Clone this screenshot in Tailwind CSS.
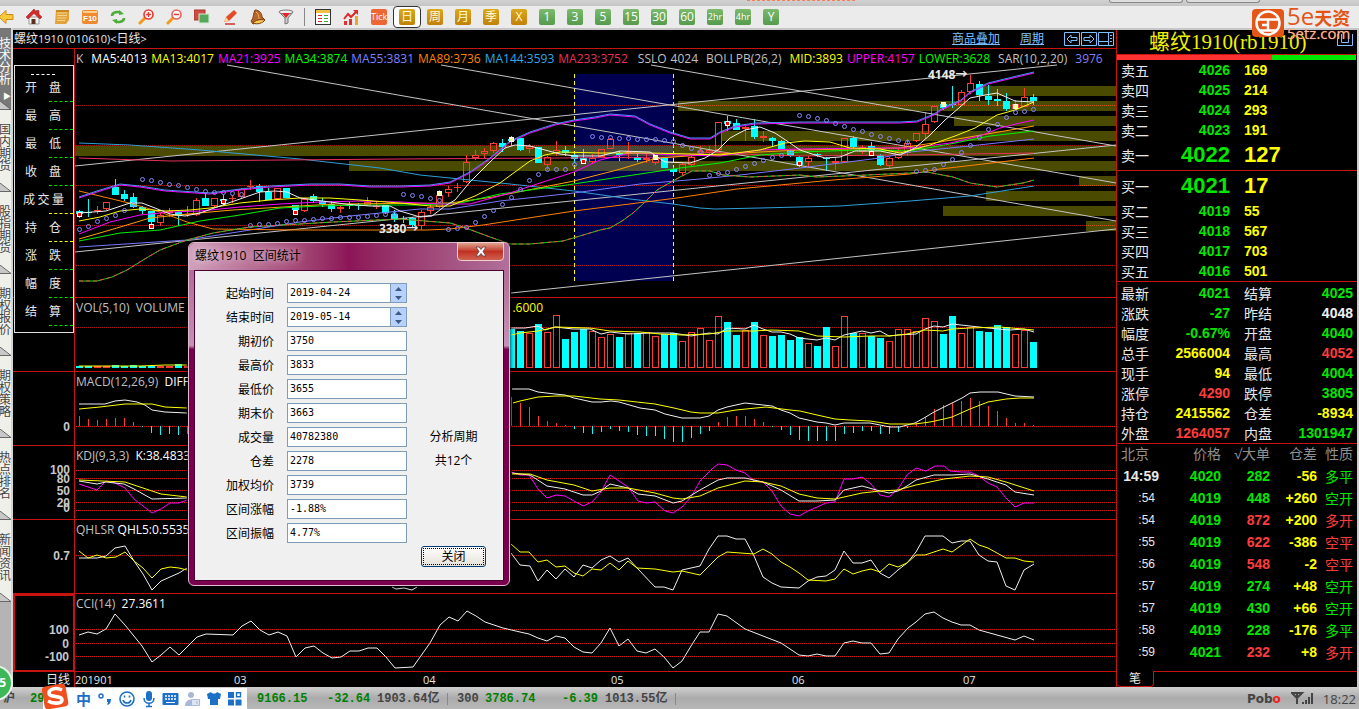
<!DOCTYPE html>
<html lang="zh-CN">
<head>
  <meta charset="UTF-8" />
  <meta name="viewport" content="width=device-width, initial-scale=1.0"/>
  <title>螺纹1910 日线</title>
  <script src="https://cdn.jsdelivr.net/npm/@tailwindcss/browser@4"></script>
</head>
<body class="relative flex flex-col h-screen overflow-hidden bg-black text-[#e8e8e8] text-[12px] leading-4 font-['Open_Sans','Noto_Sans_CJK_SC',sans-serif]">

  <!-- Window strip -->
  <div class="relative h-[6px] shrink-0 bg-gradient-to-b from-[#d2d2d2] to-[#c4c4c4] overflow-hidden">
    <div class="absolute left-[747px] top-0 w-[108px] border-t border-dashed border-[#f08060]"></div>
    <div class="absolute right-[176px] top-0 w-[74px] h-[3px] rounded-b border border-t-0 border-[#888] bg-[#ddd]"></div>
    <div class="absolute right-[99px] top-0 w-[74px] h-[3px] rounded-b border border-t-0 border-[#888] bg-[#ddd]"></div>
  </div>

  <!-- Toolbar -->
  <header class="flex items-center h-6 shrink-0 bg-[#ebebeb] border-b-2 border-[#c6c6c6] text-white">
    <nav id="toolbar" class="flex items-center -ml-2 h-full" aria-label="工具栏">
      <button class="w-7 flex justify-center" aria-label="后退"><svg width="16" height="16" viewBox="0 0 16 16"><path d="M1 8 8 1.500v4h7v5H8v4z" fill="#fbc93a" stroke="#d08a1c"/></svg></button>
      <button class="w-7 flex justify-center" aria-label="首页"><svg width="16" height="16" viewBox="0 0 16 16"><path d="M3 8v7h10V8z" fill="#f4f4f4" stroke="#999"/><path d="M8 0 0 8l2 2 6-5.500L14 10l2-2-3-2.800V1.500h-2.500V3z" fill="#d22c2c" stroke="#9a1515" stroke-width=".5"/><path d="M5.500 10h4v5h-4z" fill="#5a3020"/></svg></button>
      <button class="w-7 flex justify-center" aria-label="公告"><svg width="16" height="16" viewBox="0 0 16 16"><path d="M2 1h13v10l-3 4H1z" fill="#e3a23a"/><path d="M3 4h10M3 6.500h10M3 9h9M3 11.500h8" stroke="#f7d48e"/><path d="M2 1h13v2H2z" fill="#c98722"/></svg></button>
      <button class="w-7 flex justify-center" aria-label="F10"><svg width="17" height="16" viewBox="0 0 17 16"><rect x="0" y="1" width="16" height="14" rx="2" fill="#f08a30"/><path d="M1 3h14" stroke="#fbd28c" stroke-width="2"/><text x="1" y="12" font-size="8" font-weight="bold" fill="#fff" font-family="Liberation Sans">F10</text></svg></button>
      <button class="w-7 flex justify-center" aria-label="刷新"><svg width="16" height="16" viewBox="0 0 16 16" fill="none" stroke="#4fae3a" stroke-width="2.600"><path d="M2 7c0-4 6-5 9-3"/><path d="M14 9c0 4-6 5-9 3"/><path d="M9 1l5 4-5 1zM7 15l-5-4 5-1z" fill="#4fae3a" stroke="none"/></svg></button>
      <button class="w-7 flex justify-center" aria-label="放大"><svg width="16" height="16" viewBox="0 0 16 16"><path d="m7 9-5 5" stroke="#f39a1e" stroke-width="3" stroke-linecap="round"/><circle cx="10.500" cy="5.500" r="4.500" fill="#fff" stroke="#e23b34" stroke-width="1.600"/><path d="M8 5.500h5M10.500 3v5" stroke="#e23b34" stroke-width="1.500"/></svg></button>
      <button class="w-7 flex justify-center" aria-label="缩小"><svg width="16" height="16" viewBox="0 0 16 16"><path d="m7 9-5 5" stroke="#f39a1e" stroke-width="3" stroke-linecap="round"/><circle cx="10.500" cy="5.500" r="4.500" fill="#fff" stroke="#e8605a" stroke-width="1.600"/><path d="M8 5.500h5" stroke="#e23b34" stroke-width="1.500"/></svg></button>
      <button class="w-7 flex justify-center" aria-label="叠加"><svg width="16" height="16" viewBox="0 0 16 16"><rect x="0" y="1" width="11" height="10" fill="#cf4a42" stroke="#a83630"/><rect x="5" y="5" width="10" height="9" fill="#58a85c" stroke="#d4ecd4"/></svg></button>
      <button class="w-7 flex justify-center" aria-label="画线"><svg width="16" height="16" viewBox="0 0 16 16"><path d="m2 13 2-5 8-7 3 3-8 8z" fill="#e34a28"/><path d="m2 13 2-5 3 4z" fill="#f6d7a0"/><path d="M3 15h10" stroke="#d03030" stroke-width="1.500"/></svg></button>
      <button class="w-7 flex justify-center" aria-label="预警"><svg width="16" height="16" viewBox="0 0 16 16"><path d="M5 1c5 0 7 4 7 7l3 3-12 4-2-3c3-2 2-8 4-11z" fill="#b9662a" stroke="#7c3c12"/><path d="M3 14c2-3 8-4 12-3-2 3-8 5-12 3z" fill="#f5cf54" stroke="#7c3c12"/><path d="M6 3c2 1 3 4 3 7" stroke="#efb060" fill="none"/></svg></button>
      <button class="w-7 flex justify-center" aria-label="筛选"><svg width="16" height="16" viewBox="0 0 16 16"><path d="M1 3 7 9v6l3-1V9l5-6z" fill="#c9ccd0" stroke="#777"/><ellipse cx="8" cy="3" rx="7" ry="2" fill="#eee" stroke="#777"/><path d="M4 4h8l-4 5z" fill="#e12626"/></svg></button>
      <span class="w-[9px] flex justify-center"><span class="w-px h-[18px] bg-[#888]"></span></span>
      <button class="w-7 flex justify-center" aria-label="报价"><svg width="16" height="16" viewBox="0 0 16 16" shape-rendering="crispEdges"><rect x="0" y="0" width="16" height="16" fill="#333"/><rect x="1" y="1" width="14" height="3" fill="#f0c048"/><rect x="1" y="4" width="14" height="11" fill="#fff"/><path d="M3 6.500h4M3 9.500h4M3 12.500h4" stroke="#c33"/><path d="M9 6.500h4M9 9.500h4M9 12.500h4" stroke="#3a3"/></svg></button>
      <button class="w-7 flex justify-center" aria-label="走势"><svg width="16" height="16" viewBox="0 0 16 16"><path d="M1 12h3v4H1zM6 10h3v6H6z" fill="#e03030"/><path d="M12 7h3v9h-3z" fill="#e8a828"/><path d="m1 10 4-5 3 3 6-6" fill="none" stroke="#e02828" stroke-width="2"/><path d="M10 1h5v5z" fill="#e02828"/></svg></button>
      <button class="w-7 flex justify-center"><span class="w-4 h-4 rounded-xs bg-[#ee6633] text-[9px] leading-4 text-center">Tick</span></button>
    </nav>
  </header>

  <main class="flex flex-1 min-h-0">
    <!-- Left tabs -->
    <nav id="sideTabs" class="w-[13px] shrink-0 flex flex-col -mt-[2px] bg-[#b4b4b4] border-r-2 border-[#d4d4d4] overflow-hidden" aria-label="板块"></nav>

    <!-- Chart column -->
    <section class="relative flex-1 min-w-0 flex flex-col">
      <div class="flex items-center justify-between h-[19px] shrink-0 border-b border-[#c81410] pl-px pr-[2px]">
        <h1 class="text-[12px]">螺纹<span class="text-[11px]">1910 (010610)&lt;</span>日线<span class="text-[11px]">&gt;</span></h1>
        <div class="flex items-center text-[#7cc0ff]">
          <a href="#" class="underline">商品叠加</a>
          <a href="#" class="underline ml-5 mr-5">周期</a>
          <button aria-label="左移"><svg width="17" height="14" viewBox="0 0 17 14" fill="none" stroke="currentColor"><path d="M.5.5h15v13H.5zM3 7l4-4v2.500h6v3H7V11z"/></svg></button>
          <button aria-label="右移"><svg width="17" height="14" viewBox="0 0 17 14" fill="none" stroke="currentColor"><path d="M.5.5h15v13H.5zM13 7 9 3v2.500H3v3h6V11z"/></svg></button>
          <button aria-label="面板"><svg width="16" height="14" viewBox="0 0 16 14" fill="none" stroke="currentColor"><path d="M.5.5h15v13H.5zM10.500 1v12M1 9.500h9M12 3.500h2M12 6.500h2M12 9.500h2"/></svg></button>
        </div>
      </div>

      <div id="charts" class="flex-1 min-h-0 grid grid-rows-[249fr_74fr_74fr_74fr_74fr_78fr_15px]">
        <div class="flex min-h-0 border-b border-[#c81410]">
          <div class="w-[62px] shrink-0 border-r border-[#c81410]"></div>
          <div class="relative flex-1 min-w-0 overflow-hidden">
            <svg id="price" class="absolute inset-0 w-full h-full" viewBox="75 49 1041 248" preserveAspectRatio="none" fill="none"></svg>
            <div class="relative flex gap-x-1 pt-[2px] pl-px whitespace-nowrap text-[#c0c0c0]">
              <span class="mr-1">K</span><span class="text-white">MA5:4013</span><span class="text-[#ffff00]">MA13:4017</span><span class="text-[#ff00ff]">MA21:3925</span><span class="text-[#00ff00]">MA34:3874</span><span class="text-[#8080ff]">MA55:3831</span><span class="text-[#ff8000]">MA89:3736</span><span class="text-[#30a8e8]">MA144:3593</span><span class="text-[#e83058]">MA233:3752</span><span class="ml-[6px]">SSLO</span><span class="mr-1">4024</span><span class="mr-1">BOLLPB(26,2)</span><span class="text-[#ffff00]">MID:3893</span><span class="text-[#ff00ff]">UPPER:4157</span><span class="text-[#00ff00]">LOWER:3628</span><span class="ml-1 mr-1">SAR(10,2,20)</span><span class="text-[#8080ff]">3976</span>
            </div>
            <span class="absolute left-[304px] top-[172px] font-bold">3380→</span>
            <span class="absolute left-[853px] top-[18px] font-bold">4148→</span>
          </div>
        </div>
        <div class="flex min-h-0 border-b border-[#c81410]">
          <div class="w-[62px] shrink-0 border-r border-[#c81410]"></div>
          <div class="relative flex-1 min-w-0 overflow-hidden">
            <svg id="volume" class="absolute inset-0 w-full h-full" viewBox="75 298 1041 73" preserveAspectRatio="none" fill="none"></svg>
            <div class="relative flex justify-between w-[468px] pt-[2px] pl-px text-[#c0c0c0]"><span>VOL(5,10)&nbsp; VOLUME</span><span class="text-[#ffff00]">.6000</span></div>
          </div>
        </div>
        <div class="flex min-h-0 border-b border-[#c81410]">
          <div class="relative w-[62px] shrink-0 border-r border-[#c81410]" data-top="372" data-height="73" data-labels="0:427"></div>
          <div class="relative flex-1 min-w-0 overflow-hidden">
            <svg id="macd" class="absolute inset-0 w-full h-full" viewBox="75 372 1041 73" preserveAspectRatio="none" fill="none"></svg>
            <div class="relative pt-[2px] pl-px text-[#c0c0c0]">MACD(12,26,9)&nbsp; <span class="text-white">DIFF</span></div>
          </div>
        </div>
        <div class="flex min-h-0 border-b border-[#c81410]">
          <div class="relative w-[62px] shrink-0 border-r border-[#c81410]" data-top="446" data-height="73" data-labels="100:470,80:479,50:491,20:503,0:508"></div>
          <div class="relative flex-1 min-w-0 overflow-hidden">
            <svg id="kdj" class="absolute inset-0 w-full h-full" viewBox="75 446 1041 73" preserveAspectRatio="none" fill="none"></svg>
            <div class="relative pt-[2px] pl-px text-[#c0c0c0]">KDJ(9,3,3)&nbsp; <span class="text-white">K:38.4833</span></div>
          </div>
        </div>
        <div class="flex min-h-0 border-b border-[#c81410]">
          <div class="relative w-[62px] shrink-0 border-r border-[#c81410]" data-top="520" data-height="73" data-labels="0.7:556"></div>
          <div class="relative flex-1 min-w-0 overflow-hidden">
            <svg id="qhlsr" class="absolute inset-0 w-full h-full" viewBox="75 520 1041 73" preserveAspectRatio="none" fill="none"></svg>
            <div class="relative pt-[2px] pl-px text-[#c0c0c0]">QHLSR <span class="text-white">QHL5:0.5535</span></div>
          </div>
        </div>
        <div class="flex min-h-0 border-b border-[#c81410]">
          <div class="relative w-[62px] shrink-0 border-2 border-b border-[#c81410]" data-top="596" data-height="74" data-labels="100:630,0:644,-100:657"></div>
          <div class="relative flex-1 min-w-0 overflow-hidden">
            <svg id="cci" class="absolute inset-0 w-full h-full" viewBox="75 594 1041 77" preserveAspectRatio="none" fill="none"></svg>
            <div class="relative pt-[2px] pl-px text-[#c0c0c0]">CCI(14)&nbsp; <span class="text-white">27.3611</span></div>
          </div>
        </div>
        <div class="flex min-h-0 leading-[15px]">
          <div class="w-[62px] shrink-0 border-r border-[#c81410] text-right pr-1">日线</div>
          <div id="dates" class="relative flex-1 text-[11px]"></div>
        </div>
      </div>

      <!-- Floating bar details -->
      <div id="barInfo" class="absolute left-px top-[35px] w-[60px] h-[268px] bg-black border border-[#e0e0e0] text-[12px]">
        <div class="h-[14px] pt-[8px] pl-4"><div class="w-6 border-t border-dashed border-white"></div></div>
      </div>
    </section>

    <!-- Quote panel -->
    <aside class="w-[243px] shrink-0 flex flex-col bg-black border-l border-l-[#c81410] border-r-2 border-r-[#d0cccc] text-[14px]">
      <div class="relative h-[25px] shrink-0 border-b border-[#c81410] pl-8 leading-6 text-[#f0f000] text-[21px] whitespace-nowrap font-['Liberation_Serif','Noto_Sans_CJK_SC',serif]">
        螺纹1910(rb1910)
        <svg class="absolute right-1 top-1 text-[#7cc0ff]" width="16" height="12" viewBox="0 0 16 12" fill="none" stroke="currentColor"><path d="M.5 0v11.500h15V0M4.500 0v8.500h7V0"/></svg>
      </div>
      <div class="flex h-[5px] shrink-0 pr-px"><span class="w-[155px] bg-[#ff3232]"></span><span class="flex-1 bg-[#00e800]"></span></div>
      <table id="asks" class="w-full table-fixed"></table>
      <table id="bids" class="w-full table-fixed border-t border-[#c81410]"></table>
      <div class="border-t border-[#c81410] pt-px">
        <table id="stats" class="w-full table-fixed"></table>
      </div>
      <table class="w-full table-fixed border-t border-[#c81410]">
        <thead>
          <tr class="h-[22px] text-[#909090]">
            <th class="w-[46px] pl-1 font-normal text-left whitespace-nowrap">北京</th>
            <th class="w-[58px] font-normal text-right">价格</th>
            <th class="w-[49px] font-normal text-right whitespace-nowrap">√大单</th>
            <th class="w-[47px] font-normal text-right">仓差</th>
            <th class="font-normal text-right pr-1 whitespace-nowrap">性质</th>
          </tr>
        </thead>
        <tbody id="ticks"></tbody>
      </table>
      <div class="flex mt-auto h-4 shrink-0 text-[12px]">
        <button class="w-[37px] border-r border-b border-[#c81410] rounded-b-sm">笔</button>
        <span class="flex-1 border-t border-[#c81410]"></span>
      </div>
    </aside>
  </main>

  <!-- Status bar -->
  <footer class="flex items-center h-[22px] shrink-0 bg-gradient-to-b from-[#d0d0d0] via-[#ababab] to-[#b8b8b8] text-[#444] pt-px font-['Liberation_Mono','Noto_Sans_CJK_SC',monospace] font-bold whitespace-nowrap">
    <span class="w-[30px] pl-[3px]">沪</span>
    <span class="w-[13px] text-[#008000] overflow-hidden">29</span>
    <div class="flex items-center w-[204px] h-full pl-8 gap-x-[5px] bg-white text-[#1c70c8]">
      <button class="w-[17px] text-[15px] font-['Noto_Sans_CJK_SC',sans-serif]">中</button>
      <button aria-label="标点"><svg width="16" height="16" viewBox="0 0 16 16"><circle cx="4" cy="5" r="2" fill="none" stroke="currentColor" stroke-width="1.500"/><path d="M10 8h4c0 3-1 5-3 6l-1-1c1-1 1-1 1-2h-1z" fill="currentColor"/></svg></button>
      <button aria-label="表情"><svg width="18" height="18" viewBox="0 0 18 18" fill="none" stroke="currentColor" stroke-width="1.600"><circle cx="9" cy="9" r="7"/><path d="M5 10c1 4 7 4 8 0M6.500 5.500v2M11.500 5.500v2"/></svg></button>
      <button aria-label="语音"><svg width="16" height="18" viewBox="0 0 16 18"><rect x="5" y="1" width="6" height="10" rx="3" fill="currentColor"/><path d="M3 8c0 7 10 7 10 0M8 13v3M5 16.500h6" fill="none" stroke="currentColor" stroke-width="1.500"/></svg></button>
      <button aria-label="键盘"><svg width="17" height="14" viewBox="0 0 17 14"><rect x=".5" y="1" width="16" height="12" rx="1" fill="currentColor"/><path d="M3 4h11M3 7h11" stroke="#fff" stroke-width="1.500" stroke-dasharray="2 1"/><path d="M4 10.500h9" stroke="#fff"/></svg></button>
      <button aria-label="账号"><svg width="17" height="16" viewBox="0 0 17 16" fill="#a8b8d8"><circle cx="7" cy="4" r="3"/><path d="M1 15c0-8 10-8 11-3v3z"/><path d="M7.500 8.500h8v6h-8z" fill="#dfe6f2" stroke="#a8b8d8"/><path d="M13 10v3" stroke="#a8b8d8"/></svg></button>
      <button aria-label="皮肤"><svg width="16" height="15" viewBox="0 0 16 15"><path d="M5 1c1 2 5 2 6 0l4 2-1 5h-2v6H4V8H2L1 3z" fill="currentColor"/></svg></button>
      <button aria-label="工具箱"><svg width="15" height="15" viewBox="0 0 15 15"><path d="M1 1h6v6H1zM1 8.500h6v6H1zM8.500 8.500h6v6h-6z" fill="currentColor"/><path d="M9.500 1.700h4v4h-4z" fill="none" stroke="currentColor" stroke-width="1.400"/></svg></button>
    </div>
    <span class="ml-[10px] w-[70px] text-[#008000]">9166.15</span>
    <span class="w-[50px] text-[#008000]">-32.64</span>
    <span class="w-[70px]">1903.64亿</span>
    <span class="w-px h-3 bg-[#888] mr-[9px]"></span>
    <span class="w-[28px]">300</span>
    <span class="w-[77px] text-[#008000]">3786.74</span>
    <span class="w-[43px] text-[#008000]">-6.39</span>
    <span class="w-[70px]">1013.55亿</span>
    <span class="w-px h-3 bg-[#888]"></span>
    <span class="ml-auto text-[12px] font-['DejaVu_Sans',sans-serif]">Pob<span class="text-[#f02020]">o</span></span>
    <svg class="ml-[10px] mr-[9px]" width="23" height="14" viewBox="0 0 23 14" fill="none" stroke="#444" stroke-width="2"><path d="M1 1h10L6 6zM6 1v11M11 11h2M15 12V8M18 12V5M21 12V1" /></svg>
    <span class="text-[13px] font-normal font-['Open_Sans',sans-serif] pr-[3px]">18:22</span>
  </footer>

  <!-- Range statistics dialog -->
  <div role="dialog" aria-labelledby="dlgTitle" class="absolute left-[188px] top-[242px] w-[322px] h-[344px] rounded-md border border-[#e0b8d0] bg-gradient-to-b from-[#a8608c] via-[#c890b4] via-30% to-[#78004c] to-31% shadow-[0_0_4px_#000] text-black text-[12px]">
    <div class="flex justify-between h-[27px] pl-[6px] pr-[5px] rounded-t-md bg-gradient-to-r from-[#d0a0bc] via-[#8c1458] to-[#b0709a]">
      <h2 id="dlgTitle" class="leading-[26px] [text-shadow:0_0_8px_#fff]">螺纹1910&nbsp; 区间统计</h2>
      <button class="w-[47px] h-[19px] -mt-px rounded-b border border-[#f0d0d0] bg-gradient-to-b from-[#e0a090] via-[#c03020] to-[#d06050] flex justify-center items-center" aria-label="关闭窗口"><svg width="12" height="11" viewBox="0 0 12 11"><path d="M1 1h3l2 2.500L8 1h3L8 5.500 11 10H8L6 7.500 4 10H1l3-4.500z" fill="#fff" stroke="#5a3a40" stroke-width=".8"/></svg></button>
    </div>
    <form class="flex h-[311px] mx-[5px] border border-[#4a0030] bg-[#f0f0f0] pt-3 pr-1">
      <div id="fields" class="flex flex-col gap-y-1 w-[213px]"></div>
      <div class="flex-1 flex flex-col items-center gap-y-2 pt-[146px]">
        <span>分析周期</span>
        <span>共12个</span>
        <button type="button" class="mt-[69px] w-[65px] h-[21px] rounded-[3px] border border-[#003c74] bg-gradient-to-b from-white to-[#e4e2d8] p-px"><span class="block h-full border border-dotted border-black leading-[16px]">关闭</span></button>
      </div>
    </form>
  </div>

  <!-- Badges -->
  <div class="absolute -left-[23px] bottom-[8px] w-9 h-9 rounded-full bg-[#3cb858] border-2 border-[#e8f4e8] text-white font-bold text-right pr-[5px] leading-8">5</div>
  <svg class="absolute left-[41px] bottom-0" width="28" height="26" viewBox="0 0 28 26"><rect x="2" y="2" width="24" height="23" rx="4" fill="#f05020" transform="rotate(-10 14 13)"/><path d="M21 7C15 4 8 6 8 10c0 5 13 2 13 7 0 4-9 4-14 1" fill="none" stroke="#fff" stroke-width="3.600"/></svg>
  <div class="absolute right-0 top-[8px] w-[107px] h-8 flex">
    <svg width="32" height="30" viewBox="0 0 32 30"><rect width="32" height="28" rx="4" y="1" fill="#e45518"/><circle cx="16" cy="15" r="11.500" fill="none" stroke="#fff" stroke-width="2.500"/><path d="M5 11.500h22M16 11v11M10 17h6M8 22.500h16" stroke="#fff" stroke-width="2.500"/></svg>
    <div class="pl-[3px] text-[#e45518] whitespace-nowrap font-['Open_Sans','Noto_Sans_CJK_SC',sans-serif]">
      <div class="leading-4 text-[18px] font-bold"><span class="text-[24px] font-medium">5e</span>天资</div>
      <div class="leading-[15px] text-[15px] text-[#f4b8a0] [text-shadow:0_0_1px_#e45518]">5etz.com</div>
    </div>
  </div>

  <script>
    const html = (id, s) => document.getElementById(id).insertAdjacentHTML('beforeend', s);
    const barX = i => 79 + 9 * i;
    const line = (pts, color, extra = '') => `<polyline points="${pts}" stroke="${color}" ${extra}/>`;
    const rule = (y, color = '#b01414') => `<path d="M75.500 ${y}.5H1116" stroke="${color}" stroke-dasharray="1 1" shape-rendering="crispEdges"/>`;

    // Toolbar periods
    ['日', '周', '月', '季', 'X'].forEach((t, i) => html('toolbar', `<button class="w-7 h-full flex justify-center items-center ${i === 0 ? 'bg-white border border-[#333] rounded-sm' : ''}"><span class="w-4 h-4 rounded-xs bg-gradient-to-b from-[#dca81c] to-[#c08008] text-[#fffbd0] text-[12px] leading-4 text-center">${t}</span></button>`));
    ['1', '3', '5', '15', '30', '60', '2hr', '4hr', 'Y'].forEach(t => html('toolbar', `<button class="w-7 flex justify-center"><span class="w-4 h-4 rounded-xs bg-gradient-to-b from-[#7cba6c] to-[#559a4c] leading-4 text-center ${t.length > 2 ? 'text-[9px]' : 'text-[12px]'}">${t}</span></button>`));

    // Side tabs
    ['技术分析', '国内期货', '股指期货', '期权报价', '期权策略', '热点排名', '新闻资讯'].forEach((t, i) => html('sideTabs', `
      <a href="#" class="relative flex flex-col items-end h-[82px] shrink-0 w-[11px] text-[12px] leading-3 ${i ? 'bg-[#f0f0ea] text-[#444] pt-[14px]' : 'bg-[#787878] text-white pt-[10px]'}">
        <span class="w-3 break-all">${t}</span>${i ? '' : '<span class="text-[8px] pt-1">▶</span>'}
        <svg class="absolute left-0 bottom-0" width="11" height="9" viewBox="0 0 11 9"><path d="M0 0v9h11z" fill="#c8c8c8"/><path d="M0 0l11 8.500H0" fill="none" stroke="#666"/></svg>
      </a>`));

    // Bar info
    [['开', '盘', 0], ['最', '高', 0], ['最', '低', 0], ['收', '盘', 0], ['成', '量', 1], ['持', '仓', 1], ['涨', '跌', 0], ['幅', '度', 0], ['结', '算', 0]].forEach(([a, b, y]) => html('barInfo', `
      <div class="h-7"><div class="flex justify-between leading-4 ${a === '成' ? 'pl-2 pr-[9px]' : 'pl-[10px] pr-3'}"><span>${a}</span>${a === '成' ? '<span>交</span>' : ''}<span>${b}</span></div>
      <div class="ml-auto mt-[5px] w-[24px] border-t border-dashed ${y ? 'border-[#ffff00]' : 'border-[#00e000]'}"></div></div>`));

    // Axis labels
    document.querySelectorAll('[data-labels]').forEach(el => {
      const { top, height, labels } = el.dataset;
      el.innerHTML = labels.split(',').map(l => {
        const [text, y] = l.split(':');
        return `<span class="absolute right-1 -translate-y-1/2 font-bold text-[#c8c8c8] font-['Liberation_Sans',sans-serif]" style="top:${(y - top) / height * 100}%">${text}</span>`;
      }).join('');
    });
    [['201901', 75], ['03', 234], ['04', 423], ['05', 611], ['06', 792], ['07', 963]].forEach(([t, x]) => html('dates', `<span class="absolute" style="left:${(x - 75) / 1041 * 100}%">${t}</span>`));

    // Candles: body top, body bottom, high, low; c = falling, r = rising
    const candles = `c211 214 210 218,c212 213 199 217,r210 211 206 214,r202 209 202 210,c187 195 179 195,c194 199 190 201,c197 207 193 208,c207 211 206 214,c211 222 211 226,r215 223 213 226,r211 213 208 217,c212 216 210 226,r214 215 206 217,r200 215 198 216,c198 206 194 206,r198 206 198 207,c199 201 195 205,r198 199 195 203,r189 197 188 198,r186 187 180 190,c186 192 184 202,c192 200 188 200,r188 199 188 200,c188 198 188 198,c205 210 205 213,r199 211 199 212,c196 201 194 203,c201 204 198 207,c204 209 201 212,r207 209 205 213,c205 206 202 209,c205 206 203 210,r202 205 197 206,r206 207 202 209,c205 213 205 214,c214 220 210 222,c218 219 216 223,c218 225 217 227,r212 226 210 230,r207 211 203 214,r195 207 190 208,r189 193 186 197,r187 188 183 192,r162 182 155 183,r155 158 150 160,r151 154 148 158,r143 151 142 153,c143 147 139 152,c139 141 136 146,c138 150 138 151,r146 149 144 153,c147 163 147 163,r157 165 156 170,r150 153 141 156,c150 153 146 156,c155 159 154 163,c158 161 149 163,r158 162 154 163,r149 157 149 157,r139 149 138 149,c153 155 151 161,r151 153 142 159,c157 160 153 162,r158 160 154 163,r158 163 157 165,c158 168 158 168,c169 172 167 175,r164 173 163 176,r157 165 156 166,r151 154 146 156,r150 153 146 154,r122 150 122 151,c121 124 116 131,c123 130 119 130,r127 129 126 141,c126 137 119 139,r136 138 131 142,c138 141 137 146,c141 149 140 150,c150 156 149 157,c157 165 156 167,r158 162 156 168,c154 155 153 157,c158 159 157 171,r161 163 157 170,r138 162 138 163,c138 147 136 148,r147 152 145 154,c146 150 142 156,c155 165 154 166,r158 166 157 168,r151 158 148 159,r143 153 139 156,r133 141 133 142,r124 134 112 139,r106 122 105 123,c104 108 102 110,c104 105 86 108,r92 105 90 105,r83 92 75 94,c84 95 81 101,c96 100 85 105,c99 101 89 106,c101 109 93 111,r104 109 100 110,r97 107 88 107,c97 101 94 105`.split(',');

    const candle = (c, i) => {
      const x = barX(i), [t, b, hi, lo] = c.slice(1).split(' ').map(Number);
      if (c[0] === 'c') return `<path d="M${x - 3} ${t}h7v${b - t}h-7zM${x} ${hi}h1V${lo}h-1z" fill="#00ffff"/>`;
      const body = b - t < 2 ? `<path d="M${x - 3} ${t}.5h7" stroke="#ff3c32"/>` : `<rect x="${x - 2.5}" y="${t + .5}" width="6" height="${b - t - 1}" stroke="#ff3c32"/>`;
      return `${body}<path d="M${x}.5 ${hi}V${t}M${x}.5 ${b}V${lo}" stroke="#ff3c32"/>`;
    };

    // Volume profile bands: left edge, top
    const bands = [[75, 146], [349, 161], [678, 101], [722, 131], [976, 86], [954, 116], [1079, 176], [986, 191], [943, 206], [1086, 221]];
    const marks = [[0, 213, 0], [8, 225, 0], [16, 200, 0], [24, 211, 0], [40, 192, 1], [48, 138, 1], [56, 160, 0], [64, 156, 1], [72, 122, 0], [80, 162, 0], [88, 152, 0], [96, 103, 1], [104, 105, 1]];
    const sar = [229,226,221,218,215,210,204,179,180,182,184,185,187,189,191,192,192,193,194,225,224,224,223,221,220,220,219,218,218,217,217,217,216,215,214,214,194,195,196,198,200,229,228,227,222,216,210,204,197,189,180,174,169,169,169,164,161,136,137,137,138,138,139,139,139,140,141,145,148,151,175,173,172,169,166,163,160,157,155,152,115,116,118,120,123,126,129,131,134,136,138,140,142,171,170,169,164,159,152,145,137,129,124,117,112,111,109];
    const upper = '79,197 100,190 120,184 140,186 165,190 210,193 240,189 270,186 310,184 340,184 370,186 400,186 430,185 450,182 470,172 490,158 510,141 530,132 555,124 574,120 595,117 610,114 635,116 650,124 670,132 690,138 710,138 720,132 735,126 755,123 800,122 850,122 900,122 917,121 934,114 943,108 961,100 970,92 988,83 1017,76 1034,72';
    const lower = '79,281 97,281 112,277 127,270 143,260 160,250 187,240 213,233 250,227 300,224 333,222 400,219 450,223 463,227 490,237 510,244 530,244 563,241 600,230 610,228 622,221 633,213 645,202 657,190 680,177 692,171 710,171 723,175 750,177 800,175 817,177 867,175 910,173 927,172 953,177 970,183 997,187 1023,183 1034,180';
    html('price', `
      <rect x="574" y="74" width="99" height="207" fill="#000050"/>
      ${[105, 145, 185, 225, 265].map(y => rule(y)).join('')}
      ${bands.map(([x, y]) => `<rect x="${x}" y="${y}" width="${1116 - x}" height="10" fill="#ffff00" fill-opacity=".29"/>`).join('')}
      <path d="M574.500 74v207M673.500 74v207" stroke="#ffff00" stroke-dasharray="4 3" shape-rendering="crispEdges"/>
      <g shape-rendering="crispEdges">${candles.map(candle).join('')}</g>
      <path d="M227 65 1116 221M441 65 1116 183M651 65 1116 146M75 166 1057 65M75 252 1116 145M511 293 1116 229" stroke="#c4c4c4"/>
      ${line('79,143 130,145 200,150 300,159 380,168 420,175 460,179 510,184 574,191 630,199 673,204 700,208 715,209 760,208 840,206 910,201 970,196 1034,186', '#2f9fd8')}
      ${line('79,158 170,161 400,159 560,158 673,157 710,152 740,154 800,156 900,155 1034,153', '#e83058')}
      ${line('79,247 187,240 250,230 300,222 350,216 420,209 450,209 500,201 574,193 640,184 700,179 740,175 800,168 880,158 910,152 960,147 1034,139', '#7878ff')}
      ${line('79,191 133,204 160,212 187,222 213,229 300,230 427,230 450,229 483,225 574,211 677,198 737,189 833,180 910,174 940,169 983,164 1034,158', '#ff8000')}
      ${line('79,239 117,228 150,218 187,214 233,210 333,204 450,203 493,197 574,181 617,170 657,158 720,154 800,150 900,148 940,142 1034,126', '#ffa000')}
      ${line('79,241 120,233 160,230 200,221 240,215 280,208 320,206 360,205 420,205 460,203 500,194 560,186 620,177 680,168 720,163 760,155 800,152 860,150 910,151 950,144 990,136 1034,131', '#00f000')}
      ${line('79,234 110,222 140,215 170,212 200,211 240,207 280,204 320,202 360,201 400,202 440,204 470,204 510,193 540,183 574,172 600,160 630,153 680,155 720,156 760,150 800,149 880,148 910,148 950,143 980,136 1000,128 1020,123 1034,120', '#ff00ff')}
      ${line('79,221 100,217 120,211 140,209 165,211 190,210 210,208 240,203 270,200 300,198 330,198 360,200 400,203 430,206 450,206 475,196 500,183 515,172 530,161 545,155 560,152 600,153 650,153 690,154 720,155 760,150 785,143 805,141 830,142 850,148 880,149 900,153 930,145 955,136 975,128 997,115 1015,110 1034,102', '#ffff00')}
      ${line('79,213 106,211 118,207 130,203 142,203 155,208 170,214 185,216 200,213 220,206 240,199 260,192 275,191 287,192 300,198 315,200 345,204 370,206 390,206 400,211 420,217 432,216 445,206 455,200 470,182 490,162 505,148 515,145 530,146 560,154 575,156 600,156 620,151 650,152 665,162 690,163 705,158 718,150 730,138 745,130 760,127 775,133 790,143 800,150 815,155 825,158 840,157 855,151 880,151 900,155 915,148 930,135 945,120 960,107 970,98 985,95 997,93 1015,101 1034,102', '#f0f0f0')}
      ${line(upper, '#ff00ff', 'transform="translate(0 1)"')}${line(upper, '#4a90ff')}
      ${line(lower, '#00e000')}${line(lower, '#ff4060', 'stroke-dasharray="4 3"')}
      ${sar.map((y, i) => i === 56 ? '' : `<circle cx="${barX(i) + .5}" cy="${y + .5}" r="2" stroke="#8888ff"/>`).join('')}
      <g shape-rendering="crispEdges">${marks.map(([i, y, w]) => `<rect x="${barX(i) - 2}" y="${y - 1}" width="5" height="5" fill="#fff"/><rect x="${barX(i) - 1}" y="${y}" width="3" height="3" fill="${w ? '#ffffa0' : '#ff0000'}"/>`).join('')}</g>`);

    // Volume
    const early = [366,366,366,366,365,366,365,366,366,366,366,364,366];
    const vols = [329,331,333,324,332,315,339,332,329,331,337,334,337,333,333,332,336,334,333,341,332,328,340,316,322,335,330,322,335,336,335,340,337,343,346,327,346,316,333,333,336,338,341,329,329,331,318,321,334,316,333,327,331,332,325,327,334,330,342];
    const red = (i) => candles[i][0] === 'r';
    const vbar = (top, i) => red(i)
      ? `<rect x="${barX(i) - 2.5}" y="${top}.5" width="6" height="${367 - top}" stroke="#ff3c32"/>`
      : `<rect x="${barX(i) - 3}" y="${top}" width="7" height="${368 - top}" fill="#00ffff"/>`;
    html('volume', `${rule(327)}<g shape-rendering="crispEdges">${early.map(vbar).join('')}${vols.map((t, i) => vbar(t, i + 48)).join('')}</g>
      ${line('79,366 140,366 165,365 187,365', '#ffff00')}
      ${line('511,328 525,328 538,326 545,330 555,327 573,329 590,329 601,334 610,332 628,334 650,333 673,333 691,336 709,333 718,334 727,328 745,329 754,325 763,329 772,332 781,332 790,334 799,338 817,340 826,338 835,340 844,335 853,333 862,331 871,333 880,331 889,336 898,335 916,334 925,329 934,326 943,327 952,324 970,326 988,328 1010,330 1024,329 1034,332', '#f0f0f0')}
      ${line('511,335 520,333 538,331 556,327 590,328 610,331 640,332 660,334 682,335 709,334 727,331 754,331 772,330 799,331 817,336 844,337 870,336 889,336 907,334 925,330 943,331 952,329 970,328 1000,327 1034,330', '#ffff00')}`);

    // MACD
    const hist = { 0: [416,419,420,419,418,418,422,427,433,435,434,435,434], 48: [397,403,407,416,421,423,425,429,433,434,432,429,431,432,435,436,436,439,442,442,438,434,431,422,417,416,416,419,422,427,430,435,440,441,441,441,441,434,433,431,431,434,434,432,428,423,417,409,405,403,401,398,401,406,411,418,423,423,425] };
    html('macd', `${rule(426, '#e01814')}<g shape-rendering="crispEdges">${Object.entries(hist).map(([s, v]) => v.map((y, i) => `<path d="M${barX(+s + i)}.5 426V${y}" stroke="${y < 427 ? '#ff3c32' : '#00ffff'}"/>`).join('')).join('')}</g>
      ${line('79,404 105,404 115,401 125,400 137,402 145,405 152,410 165,412 187,413', '#f0f0f0')}
      ${line('512,389 529,389 538,392 555,394 565,395 574,398 592,402 601,402 611,401 619,402 640,408 655,410 665,414 682,418 700,418 709,416 718,410 727,407 745,403 772,406 781,410 790,413 799,418 817,422 826,423 835,425 844,423 870,423 880,425 890,427 900,427 907,425 915,423 924,418 934,412 944,407 952,403 962,398 970,393 980,392 998,392 1015,396 1034,397', '#f0f0f0')}
      ${line('79,409 100,407 125,404 152,404 165,407 187,408', '#ffff00')}
      ${line('513,403 520,401 538,397 556,396 574,396 600,399 619,400 655,404 674,408 691,412 700,413 718,413 736,410 766,407 790,410 800,411 817,415 835,419 850,420 870,421 890,424 915,424 930,422 944,419 952,417 970,409 988,402 1006,399 1020,398 1034,398', '#ffff00')}`);

    // KDJ
    html('kdj', `${[470, 478, 490, 502, 510].map(y => rule(y, '#e01814')).join('')}
      ${line('79,484 97,490 106,481 115,483 125,488 134,499 143,506 152,513 161,509 170,503 179,503 187,500', '#ff00ff')}
      ${line('511,472 520,475 529,475 538,489 547,498 556,495 565,496 574,501 583,506 592,502 601,492 610,475 628,487 638,501 646,503 655,502 665,511 673,513 682,507 691,497 700,481 712,469 718,464 727,465 736,470 745,473 754,481 763,482 772,491 781,506 790,514 799,516 808,511 826,503 835,502 844,479 853,479 862,477 871,484 880,495 889,497 898,489 907,475 916,468 926,471 935,466 944,466 950,471 961,472 970,472 979,476 988,483 997,487 1006,498 1015,507 1024,503 1034,503', '#ff00ff')}
      ${line('79,481 97,484 106,482 124,484 134,489 152,499 187,498', '#f0f0f0')}
      ${line('512,473 530,475 547,486 565,489 583,495 592,495 601,491 610,484 628,488 638,494 655,496 673,503 682,501 700,490 718,480 727,478 745,478 763,482 781,490 799,501 817,501 835,500 844,490 862,486 880,491 889,493 898,491 907,486 916,480 934,475 952,475 970,474 988,479 1006,485 1015,492 1034,495', '#f0f0f0')}
      ${line('79,480 125,482 161,494 187,497', '#ffff00')}
      ${line('512,474 530,474 547,480 574,485 592,491 610,488 628,488 655,493 673,498 682,499 700,496 718,488 745,481 763,482 781,486 799,494 817,498 835,499 862,493 880,491 898,490 916,485 944,479 970,476 988,477 1006,482 1034,491', '#ffff00')}`);

    // QHLSR
    html('qhlsr', `${rule(555)}
      ${line('79,558 97,558 106,556 115,548 125,546 134,561 143,574 152,590 161,581 179,573 187,568', '#f0f0f0')}
      ${line('392,587 396,589 404,588 412,590 417,587', '#f0f0f0')}
      ${line('511,553 520,565 530,566 538,581 547,570 556,579 565,569 574,577 583,565 592,568 601,560 610,556 619,562 628,558 638,569 655,587 664,587 673,590 682,570 700,566 709,549 718,536 727,536 736,539 745,539 754,556 763,577 772,583 781,587 799,588 808,581 817,577 826,576 835,570 844,551 853,563 862,563 871,560 880,573 889,578 898,570 907,563 916,552 925,536 943,536 952,543 961,541 970,541 979,555 988,561 997,562 1006,586 1015,590 1024,570 1034,564', '#f0f0f0')}
      ${line('79,551 88,558 97,555 106,558 116,557 125,552 134,561 143,568 152,578 161,569 170,567 179,568 187,570', '#ffff00')}
      ${line('511,544 520,552 529,552 538,562 547,560 556,567 565,566 574,573 583,576 592,569 601,570 610,563 619,570 628,561 637,568 655,569 673,572 682,571 700,575 718,557 727,552 754,554 763,549 772,554 781,562 790,567 799,573 808,580 826,581 835,579 844,569 853,574 862,571 871,569 880,572 889,564 898,567 907,563 916,555 925,555 943,549 952,552 970,539 979,545 988,548 1006,558 1015,558 1024,561 1034,562', '#ffff00')}`);

    // CCI
    html('cci', `${[629, 643, 656].map(y => rule(y, '#e01814')).join('')}
      ${line('79,635 88,632 97,634 106,629 115,614 125,625 142,646 152,662 161,655 170,647 179,655 197,637 206,634 233,635 242,626 251,621 260,630 269,635 278,632 287,636 296,657 305,648 314,646 323,653 332,658 341,657 350,651 359,651 368,648 377,648 386,657 395,668 413,667 430,643 440,625 449,617 458,621 467,611 476,616 485,622 503,628 520,632 529,634 538,638 547,641 556,636 565,638 574,647 583,652 592,653 601,643 610,628 619,646 628,639 637,651 646,653 655,649 664,657 673,668 682,661 691,646 700,632 709,632 718,614 727,616 745,629 763,636 781,643 799,655 808,656 817,654 826,656 835,656 844,643 853,641 862,643 871,643 880,654 889,653 898,639 908,628 916,622 925,614 934,612 943,618 952,622 961,625 970,625 979,630 997,635 1015,640 1024,636 1034,640', '#f0f0f0')}`);

    // Order book
    const quote = ([label, price, qty], big) => `
      <tr class="${big ? 'h-[30px] text-[22px]' : 'h-5 text-[14px]'} font-bold font-['Liberation_Sans',sans-serif]">
        <th class="w-[46px] pl-1 text-[14px] font-normal text-left whitespace-nowrap font-['Noto_Sans_CJK_SC',sans-serif]">${label}</th>
        <td class="w-[67px] text-right text-[#00e800]">${price}</td><td class="pl-[14px] text-[#ffff00]">${qty}</td></tr>`;
    html('asks', [['卖五', 4026, 169], ['卖四', 4025, 214], ['卖三', 4024, 293], ['卖二', 4023, 191], ['卖一', 4022, 127]].map((r, i) => quote(r, i === 4)).join(''));
    html('bids', [['买一', 4021, 17], ['买二', 4019, 55], ['买三', 4018, 567], ['买四', 4017, 703], ['买五', 4016, 501]].map((r, i) => quote(r, i === 0)).join(''));

    const tone = { g: 'text-[#00e800]', r: 'text-[#ff3c3c]', y: 'text-[#ffff00]', w: 'text-[#f0f0f0]' };
    html('stats', [
      ['最新', '4021', 'g', '结算', '4025', 'g'], ['涨跌', '-27', 'g', '昨结', '4048', 'w'],
      ['幅度', '-0.67%', 'g', '开盘', '4040', 'g'], ['总手', '2566004', 'y', '最高', '4052', 'r'],
      ['现手', '94', 'y', '最低', '4004', 'g'], ['涨停', '4290', 'r', '跌停', '3805', 'g'],
      ['持仓', '2415562', 'y', '仓差', '-8934', 'y'], ['外盘', '1264057', 'r', '内盘', '1301947', 'g']
    ].map(([a, b, c, d, e, f]) => `
      <tr class="h-5 font-bold font-['Liberation_Sans',sans-serif]">
        <th class="w-[46px] pl-1 font-normal text-left whitespace-nowrap font-['Noto_Sans_CJK_SC',sans-serif]">${a}</th><td class="w-[67px] text-right ${tone[c]}">${b}</td>
        <th class="w-[46px] pl-[14px] font-normal text-left whitespace-nowrap font-['Noto_Sans_CJK_SC',sans-serif]">${d}</th><td class="text-right pr-1 ${tone[f]}">${e}</td></tr>`).join(''));

    html('ticks', [
      ['14:59', 4020, 282, 'g', '-56', '多平', 'g'], [':54', 4019, 448, 'g', '+260', '空开', 'g'],
      [':54', 4019, 872, 'r', '+200', '多开', 'r'], [':55', 4019, 622, 'r', '-386', '空平', 'r'],
      [':56', 4019, 548, 'r', '-2', '空平', 'r'], [':57', 4019, 274, 'g', '+48', '空开', 'g'],
      [':57', 4019, 430, 'g', '+66', '空开', 'g'], [':58', 4019, 228, 'g', '-176', '多平', 'g'],
      [':59', 4021, 232, 'r', '+8', '多开', 'r']
    ].map(([t, p, q, qc, d, k, kc], i) => `
      <tr class="h-[22px] font-bold text-right font-['Liberation_Sans',sans-serif]">
        <td class="${i ? 'text-[12px] font-normal pr-2' : 'text-[14px] pr-1'}">${t}</td><td class="text-[#00e800]">${p}</td><td class="${tone[qc]}">${q}</td><td class="text-[#ffff00]">${d}</td>
        <td class="pr-1 font-normal whitespace-nowrap font-['Noto_Sans_CJK_SC',sans-serif] ${tone[kc]}">${k}</td></tr>`).join(''));

    // Dialog fields
    [['起始时间', '2019-04-24', 1], ['结束时间', '2019-05-14', 1], ['期初价', '3750'], ['最高价', '3833'], ['最低价', '3655'], ['期末价', '3663'], ['成交量', '40782380'], ['仓差', '2278'], ['加权均价', '3739'], ['区间涨幅', '-1.88%'], ['区间振幅', '4.77%']].forEach(([label, value, spin], i) => html('fields', `
      <div class="flex items-center h-5">
        <label for="f${i}" class="w-[79px] mr-[13px] pt-px text-right">${label}</label>
        <div class="flex w-[120px] h-5 border border-[#7f9db9] bg-white">
          <input id="f${i}" value="${value}" class="flex-1 min-w-0 pl-[2px] text-[10px] font-['DejaVu_Sans_Mono',monospace] outline-none" />
          ${spin ? '<span class="flex flex-col w-4 bg-[#b8d0fc] border-l border-[#7f9db9]"><button type="button" class="flex-1 flex items-center justify-center" aria-label="增加"><svg width="7" height="4" viewBox="0 0 7 4"><path d="M0 4 3.500 0 7 4z" fill="#405888"/></svg></button><button type="button" class="flex-1 flex items-center justify-center" aria-label="减少"><svg width="7" height="4" viewBox="0 0 7 4"><path d="M0 0 3.500 4 7 0z" fill="#405888"/></svg></button></span>' : ''}
        </div>
      </div>`));
  </script>
</body>
</html>
